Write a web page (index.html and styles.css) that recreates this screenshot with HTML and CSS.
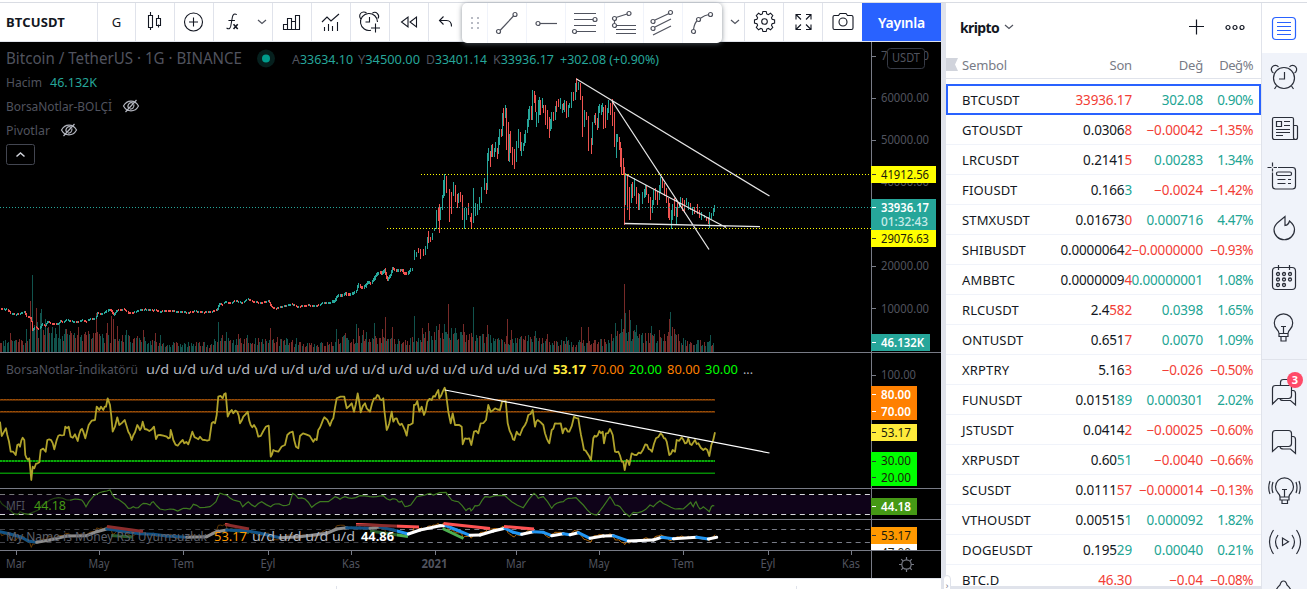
FILE: index.html
```
<!DOCTYPE html>
<html lang="tr">
<head>
<meta charset="utf-8">
<title>BTCUSDT</title>
<link rel="stylesheet" href="styles.css">
</head>
<body>
<div class="app">
  <main class="left">
    <header class="toolbar">
      <div class="cell symbol">BTCUSDT</div>
      <div class="cell w38">G</div>
      <div class="cell w39"><svg class="ico" viewBox="0 0 28 28"><path d="M9.500 4v4m0 14v-3M7.500 7.500h4v12h-4zM17.500 7v3.500m0 9v-3M15.500 10.500h4v7h-4z"/></svg></div>
      <div class="cell w39"><svg class="ico" viewBox="0 0 28 28"><circle cx="13.500" cy="14" r="9"/><path d="M13.500 9.500v9M9 14h9"/></svg></div>
      <div class="cell w59"><svg class="ico" viewBox="0 0 28 28"><path d="M6 20.500c3 2 4 0 4.500-2l1.700-9.500c.6-3.500 2.500-4.500 4.800-3M8 12.500h7"/><path d="M13.500 16.500l4.500 5m0-5l-4.500 5" stroke-width="1.700"/></svg><svg class="chev" viewBox="0 0 10 6"><path d="M1 1l4 3.500L9 1"/></svg></div>
      <div class="cell w39"><svg class="ico" viewBox="0 0 28 28"><path d="M5.500 21.500v-5h4v5zm4 0v-11h4v11zm4 0v-8h4v8m0 0v-14h4v14zM5 21.500h17"/></svg></div>
      <div class="cell w39"><svg class="ico" viewBox="0 0 28 28"><path d="M5 13l5-5 4 4 8-7M7.500 22v-4m4 4v-7m4 7v-5m5 5v-9" transform="translate(0 1)"/></svg></div>
      <div class="cell w39"><svg class="ico" viewBox="0 0 28 28"><path d="M15 22.200A8.500 8.500 0 1 1 21.500 14M13.500 9v5h-4M5 11a4 4 0 0 1 5.500-6M16.500 5A4 4 0 0 1 22 10.500M19.500 15.500v9M15 20h9"/></svg></div>
      <div class="cell w39"><svg class="ico" viewBox="0 0 28 28"><path d="M13 9v10l-6.500-5zM21.500 9v10L15 14z"/></svg></div>
      <div class="cell w39 nob"><svg class="ico undo" viewBox="0 0 28 28"><path d="M10.500 8.500l-4 4 4 4M6.500 12.500h7c3 0 5 2 5 6"/></svg></div>
      <div class="spacer"></div>
      <div class="cell w24"><svg class="chev drop" viewBox="0 0 10 6"><path d="M1 1l4 3.500L9 1"/></svg></div>
      <div class="cell w39"><svg class="ico" viewBox="0 0 28 28"><circle cx="14.500" cy="13.500" r="2.800"/><path d="M12.300 4.500h3.400l.6 2.600 1.600.7 2.300-1.400 2.400 2.400-1.400 2.300.7 1.600 2.600.6v3.400l-2.600.6-.7 1.600 1.400 2.300-2.400 2.400-2.300-1.400-1.600.7-.6 2.600h-3.400l-.6-2.600-1.600-.7-2.300 1.400-2.400-2.400 1.400-2.300-.7-1.600-2.600-.6v-3.400l2.600-.6.7-1.600-1.400-2.300 2.400-2.400 2.300 1.400 1.600-.7z" transform="translate(1.100 -.9) scale(.96)"/></svg></div>
      <div class="cell w39"><svg class="ico" viewBox="0 0 28 28"><path d="M12 11.500l-5-5m0 5v-5h5M17 11.500l5-5m-5 0h5v5M12 16.500l-5 5m0-5v5h5M17 16.500l5 5m0-5v5h-5"/></svg></div>
      <div class="cell w39 nob"><svg class="ico" viewBox="0 0 28 28"><path d="M5.500 7.500h4l1.500-2h6l1.500 2h4q1.500 0 1.500 1.500v11q0 1.500-1.500 1.500h-17Q4 21.500 4 20V9q0-1.500 1.500-1.500z"/><circle cx="14" cy="14" r="4"/></svg></div>
      <button class="publish">Yayınla</button>
      <div class="floatbar">
        <div class="fcell grip"><svg width="10" height="14" viewBox="0 0 10 14"><g fill="#b8bbc4"><path d="M1 1h2v2H1zM7 1h2v2H7zM1 6h2v2H1zM7 6h2v2H7zM1 11h2v2H1zM7 11h2v2H7z"/></g></svg></div>
        <div class="fcell"><svg class="draw" viewBox="0 0 28 28"><path d="M7 21.500L20.500 7"/><circle cx="5.500" cy="22.500" r="2"/><circle cx="22" cy="5.500" r="2"/></svg></div>
        <div class="fcell"><svg class="draw" viewBox="0 0 28 28"><path d="M8 14.500h17"/><circle cx="6" cy="14.500" r="2"/></svg></div>
        <div class="fcell"><svg class="draw" viewBox="0 0 28 28"><path d="M3 4.500h22M3 10.500h19M3 16.500h22M6 22.500h19"/><circle cx="24" cy="10.500" r="2"/><circle cx="3.500" cy="22.500" r="2"/></svg></div>
        <div class="fcell"><svg class="draw" viewBox="0 0 28 28"><path d="M6 8.500L17 5M4.500 11.500v3M6.500 16.500H26M6 20.500h20M6 24.500h20"/><circle cx="4.500" cy="9.500" r="2"/><circle cx="19" cy="4.500" r="2"/><circle cx="4.500" cy="16.500" r="2"/></svg></div>
        <div class="fcell"><svg class="draw" viewBox="0 0 28 28"><path d="M5 11.500l15-7M5 18.500L22 10M4 26l18-9"/><circle cx="4" cy="12.500" r="2"/><circle cx="21.500" cy="3.500" r="2"/><circle cx="4" cy="19.500" r="2"/></svg></div>
        <div class="fcell last"><svg class="draw" viewBox="0 0 28 28"><path d="M4.500 20.500Q5.500 14 8 12M11 9.500Q16 6 20 5.500"/><circle cx="4.500" cy="22.500" r="2"/><circle cx="9.500" cy="10.500" r="2"/><circle cx="21.500" cy="5.500" r="2"/></svg></div>
      </div>
    </header>
    <svg class="chart" viewBox="0 42 941 536">
      <rect x="0" y="42" width="941" height="536" fill="#000"/>
      <g shape-rendering="crispEdges">
        <g id="volume"></g>
        <g id="candles"></g>
      </g>
      <g fill="none" stroke-dasharray="1 2" shape-rendering="crispEdges">
        <path d="M421 174.500H871M387 228.500H871" stroke="#ff0"/>
        <path d="M0 207.500H871" stroke="#26a69a"/>
      </g>
      <path d="M576.500 79L769.500 196M612 101L709 249.500M626 174.500L726 227.500M624.500 223.500L760 226.700" fill="none" stroke="#e4e4e4" stroke-width="1.300"/>

      <g fill="none" stroke-width="1.500">
        <path d="M0 399.800H715M0 411.800H715" stroke="#9b4d07"/>
        <path d="M0 399.800H715M0 411.800H715" stroke="#6b3505" stroke-dasharray="1 2" stroke-width="1"/>
        <path d="M0 461H715M0 473.300H715" stroke="#058a05"/>
        <path d="M0 461H715" stroke="#0cc00c" stroke-dasharray="2 1"/>
      </g>
      <polyline id="rsi" fill="none" stroke="#b0a32b" stroke-width="1.800" stroke-linejoin="round"/>
      <path d="M445 390L769.500 453" stroke="#fff" stroke-width="1.200"/>

      <rect x="0" y="495" width="871" height="19" fill="#0f0319"/>
      <path d="M0 494.500H871M0 514.500H871" stroke="#d8d8dc" stroke-dasharray="5 4.300" stroke-width="1"/>
      <polyline id="mfi" fill="none" stroke="#3e7a20" stroke-width="1.200"/>
      <rect x="0" y="490" width="70" height="23" fill="#000" opacity=".45"/>

      <path d="M0 529.500H871M0 542.500H871" stroke="#787b86" stroke-dasharray="5 4.300"/>
      <g fill="none" stroke-width="3">
        <polyline id="money-raw" stroke="#b86a08" stroke-width="1"/>
        <path d="M111 535.500L132 537M230 530L249 532.500M370 531L408 536.500M442.500 528.500L463.500 538.500" stroke="#4caf50"/>
        <g id="money"></g>
        <path d="M107 526.500L143 531.500M225 524.500L249 529M356 524.500L419 527M443.500 523.500L490 528.500M504 526.500L534 529" stroke="#ff5252"/>
      </g>
      <rect x="0" y="524" width="397" height="24" fill="#000" opacity=".45"/>

      <path d="M0 352.500H941M0 488.500H941M0 519.500H941M0 550.500H941M871.500 42V578" stroke="#787b86" fill="none"/>
      <path d="M16.500 551v4M99.500 551v4M183.500 551v4M268.500 551v4M351.500 551v4M435.500 551v4M516.500 551v4M599.500 551v4M683.500 551v4M768.500 551v4M851.500 551v4M872 56.500h4M872 98.500h4M872 140.500h4M872 266.500h4M872 308.500h4M872 375.500h4" stroke="#787b86"/>

      <g class="t axis" text-anchor="middle">
        <text x="16" y="568" textLength="20">Mar</text><text x="99" y="568" textLength="21">May</text><text x="183" y="568" textLength="22">Tem</text><text x="268" y="568" textLength="15">Eyl</text><text x="351" y="568" textLength="18">Kas</text><text x="434.500" y="568" textLength="26" font-weight="700">2021</text><text x="516" y="568" textLength="20">Mar</text><text x="599" y="568" textLength="21">May</text><text x="683" y="568" textLength="22">Tem</text><text x="768" y="568" textLength="15">Eyl</text><text x="851" y="568" textLength="18">Kas</text>
      </g>
      <g class="t axis">
        <text x="881" y="60" textLength="48">70000.00</text><text x="881" y="102" textLength="48">60000.00</text><text x="881" y="144" textLength="48">50000.00</text><text x="881" y="186" textLength="48">40000.00</text><text x="881" y="270" textLength="48">20000.00</text><text x="881" y="312.500" textLength="48">10000.00</text><text x="881" y="379" textLength="35">100.00</text>
      </g>
      <rect x="887.500" y="48.500" width="37" height="20" rx="3" fill="#000" stroke="#363a45"/>
      <text class="axis" x="892" y="62" textLength="28">USDT</text>
      <g fill="#ff0"><rect x="871" y="166" width="65" height="17"/><rect x="871" y="230" width="65" height="17"/></g>
      <g fill="#26a69a"><rect x="871" y="199" width="65" height="31"/><rect x="871" y="334" width="59" height="17"/></g>
      <rect x="871" y="386" width="46" height="34" fill="#ff8000"/><rect x="871" y="424" width="46" height="17" fill="#ffeb3b"/><rect x="871" y="452" width="46" height="34" fill="#0f0"/><rect x="871" y="498" width="46" height="17" fill="#459915"/><rect x="871" y="527" width="46" height="17" fill="#ff9800"/><rect x="871" y="544" width="46" height="6" fill="#fff"/>
      <g class="t tag">
        <text x="881" y="179" textLength="48">41912.56</text><text x="881" y="243" textLength="48">29076.63</text>
        <text x="881" y="437" textLength="30">53.17</text><text x="881" y="465" textLength="30">30.00</text><text x="881" y="482" textLength="30">20.00</text><text x="881" y="540" textLength="30">53.17</text>
        <g clip-path="url(#tagclip)"><text x="881" y="557" textLength="30">47.00</text></g>
        <g class="light"><text x="881" y="212" textLength="48">33936.17</text><text x="881" y="226" textLength="47" class="timer">01:32:43</text><text x="881" y="347" textLength="43">46.132K</text><text x="881" y="399" textLength="30">80.00</text><text x="881" y="416" textLength="30">70.00</text><text x="881" y="511" textLength="30">44.18</text></g>
      </g>
      <clipPath id="tagclip"><rect x="871" y="544" width="60" height="6"/></clipPath>
      <path d="M872 174.500h4M872 238.500h4M872 432.500h4M872 461.500h4M872 477.500h4M872 535.500h4" stroke="#333"/>
      <path d="M872 207.500h4M872 342.500h4M872 394.500h4M872 411.500h4M872 506.500h4" stroke="#fff"/>
      <g stroke="#787b86" fill="none" stroke-width="1.200"><circle cx="906.500" cy="564.500" r="4.700"/><path d="M906.500 557v2.800M906.500 569.200v2.800M899 564.500h2.800M911.200 564.500h2.800M901.200 559.200l2 2M909.800 567.800l2 2M911.800 559.200l-2 2M903.200 567.800l-2 2"/></g>

      <g class="t legend">
        <text x="6" y="64" class="title" textLength="236">Bitcoin / TetherUS · 1G · BINANCE</text>
        <text x="292" y="64" textLength="61">A<tspan class="up">33634.10</tspan></text>
        <text x="358" y="64" textLength="62">Y<tspan class="up">34500.00</tspan></text>
        <text x="426" y="64" textLength="61">D<tspan class="up">33401.14</tspan></text>
        <text x="493" y="64" textLength="61">K<tspan class="up">33936.17</tspan></text>
        <text x="560" y="64" class="up" textLength="99">+302.08 (+0.90%)</text>
        <text x="6" y="87" textLength="36">Hacim</text><text x="50" y="87" class="up" textLength="47">46.132K</text>
        <text x="6" y="111" textLength="106">BorsaNotlar-BOLÇİ</text>
        <text x="6" y="135" textLength="44">Pivotlar</text>
        <text x="6" y="374" textLength="132">BorsaNotlar-İndikatörü</text>
        <text x="146" y="374" class="ud" textLength="401">u/d u/d u/d u/d u/d u/d u/d u/d u/d u/d u/d u/d u/d u/d u/d</text>
        <text x="553" y="374" fill="#ffeb3b" font-weight="700" textLength="33">53.17</text>
        <text x="591" y="374" fill="#ff8000" textLength="33">70.00</text><text x="629" y="374" fill="#0f0" textLength="33">20.00</text><text x="667" y="374" fill="#ff8000" textLength="33">80.00</text><text x="705" y="374" fill="#0f0" textLength="33">30.00</text><text x="743" y="374" class="ud">...</text>
        <text x="6" y="510" textLength="19">MFI</text><text x="34" y="510" fill="#459915" textLength="32">44.18</text>
        <text x="6" y="541" class="over" textLength="201">My Name is Money RSI Uyumsuzluk</text>
        <text x="214" y="541" fill="#ff9800" textLength="33">53.17</text>
        <text x="252" y="541" class="ud" textLength="103">u/d u/d u/d u/d</text>
        <text x="361" y="541" fill="#fff" font-weight="700" textLength="33">44.86</text>
      </g>
      <circle cx="266" cy="58.500" r="9" fill="#06201e"/><circle cx="266" cy="58.500" r="4" fill="#009b8c"/>
      <g fill="none" stroke="#b2b5be" stroke-width="1.200"><path id="eye" d="M123.500 106c3.500-6.500 11.500-6.500 15 0-3.500 6.500-11.500 6.500-15 0zM125.500 112L136.500 100M128.500 108a3.500 3.500 0 0 1 4.500-5M133.800 104.500a3.500 3.500 0 0 1-4 4.500"/><use href="#eye" x="-62" y="24"/></g>
      <rect x="6.500" y="144.500" width="28" height="20" rx="2" fill="#000" stroke="#434651"/><path d="M16.500 156.500l4-3.500 4 3.500" fill="none" stroke="#d1d4dc" stroke-width="1.500"/>
    </svg>
    <div class="bottom"><i></i><i></i></div>
  </main>
  <div class="divider"></div>
  <section class="watch">
    <div class="whead"><b>kripto</b><svg class="chev" viewBox="0 0 10 6"><path d="M1 1l4 3.500L9 1"/></svg><span class="grow"></span>
      <svg width="16" height="16" viewBox="0 0 16 16"><path d="M7.500 .5v15M0 7.500h15" stroke="#131722" stroke-width="1.200"/></svg>
      <svg class="dots" width="20" height="8" viewBox="0 0 20 8"><g fill="none" stroke="#131722" stroke-width="1.200"><circle cx="3" cy="4.500" r="2"/><circle cx="10" cy="4.500" r="2"/><circle cx="17" cy="4.500" r="2"/></g></svg>
    </div>
    <div class="row cols"><svg class="flag" viewBox="0 0 12 13"><path d="M0 0h12L9 6.500 12 13H0z" fill="#d1d4dc"/></svg><span>Sembol</span><span>Son</span><span>Değ</span><span>Değ%</span></div>
    <div class="rows" id="rows"></div>
  </section>
  <nav class="side">
    <div class="item active"><svg viewBox="0 0 28 28"><rect x="2.500" y="3.500" width="23" height="22" rx="3.500"/><path d="M7 8.500h14M7 12.500h14M7 16.500h14M7 20.500h14"/></svg></div>
    <div class="item"><svg viewBox="0 0 28 28"><circle cx="14" cy="14" r="10.500"/><path d="M14.500 8v7H9M3.500 9a4 4 0 1 1 5-6M19.500 3a4 4 0 1 1 5 6M6.500 22l-2 3M21.500 22l2 3"/></svg></div>
    <div class="item"><svg viewBox="0 0 28 28"><path d="M23.500 11.500h3q1 0 1 1v11q0 2-2 2h-21q-2 0-2-2V5q0-1.500 1.500-1.500h18q1.500 0 1.500 1.500v18.500q0 2 2 2M6.500 7.500h5v5h-5zM14 7.500h6M14 11.500h6M6 15.500h14M6 18.500h14M6 21.500h7"/></svg></div>
    <div class="item"><svg viewBox="0 0 28 28"><path d="M2.500 8.500v13.500q0 3 3 3h17q3 0 3-3V6.500q0-3-3-3H8M2.500-1.500v4M2.500 4.500v3M-2.500 3.500h4M3.500 3.500h3.500M7.500 15.500h8M18 15.500h3M7.500 19.500h8M18 19.500h3"/><rect x="6.500" y="8" width="15" height="3.500" rx="1.500"/></svg></div>
    <div class="item"><svg viewBox="0 0 28 28"><path d="M9 7.500l6-5v9q3.500-.5 4.500-4.500c3 2.500 5 5 5 8.500a10.200 10.200 0 0 1-20.500 0c0-4 2-5.500 5-8z"/></svg></div>
    <div class="item"><svg viewBox="0 0 28 28"><rect x="2.500" y="3.500" width="23" height="22" rx="3.500"/><path d="M8.500 1v5M19.500 1v5"/><g stroke-width="1.300"><circle cx="8" cy="10" r="1.500"/><circle cx="14" cy="10" r="1.500"/><circle cx="20" cy="10" r="1.500"/><circle cx="8" cy="15.500" r="1.500"/><circle cx="14" cy="15.500" r="1.500"/><circle cx="20" cy="15.500" r="1.500"/><circle cx="8" cy="21" r="1.500"/><circle cx="14" cy="21" r="1.500"/></g></svg></div>
    <div class="item"><svg viewBox="0 0 28 28"><path d="M9 19.500q0-2-2-4a9.200 9.200 0 1 1 13 0q-2 2-2 4zM9 19.500v3h9v-3M9 22.500h9M11 22.500v4.500h5v-4.500M13.500 19.500v-7M11 12.500h5"/></svg></div>
    <div class="sep"></div>
    <div class="item"><svg viewBox="0 0 28 28"><path d="M2.500 26v-15.500q0-3 3-3h16v10q0 3-3 3H8zM10.500 7V4.500q0-3 3-3h8M22 12.500h1q2.500 0 2.500 3v11.500l-5-4.500h-7q-3 0-3.500-1.500"/></svg><em>3</em></div>
    <div class="item"><svg viewBox="0 0 28 28"><path d="M2.500 23.500v-18q0-3 3-3h13q3 0 3 3v10q0 3-3 3H8zM22 8.500h1q2.500 0 2.500 3v14l-5-4.500h-7q-3 0-3.500-2"/></svg></div>
    <div class="item"><svg viewBox="0 0 28 28"><path d="M10 19q0-2-2-4a9 9 0 1 1 13 0q-2 2-2 4zM10 19v3h9v-3M12 22v3.500h5.500V22M14.500 19v-7M12 11.500h5M3 4q-2 6 0 11M0 3q-2.500 7 0 13M26 4q2 6 0 11M29 3q2.500 7 0 13"/></svg></div>
    <div class="item"><svg viewBox="0 0 28 28"><path d="M12.500 10v7.500l6-3.800zM8 7q-5 7 0 14M3.500 2q-8 12 0 24M22 7q5 7 0 14M26.500 2q8 12 0 24"/></svg></div>
    <div class="item"><svg viewBox="0 0 28 28"><path d="M4 18q2-8 6-11 1-4 3.500-4t3.500 4q4 3 6 11"/></svg></div>
  </nav>
  <button class="handle">›</button>
</div>
<script src="chart.js"></script>
</body>
</html>
```
FILE: styles.css
```
* { box-sizing: border-box; }
body { margin: 0; width: 1307px; height: 589px; overflow: hidden; background: #fff; font-family: "Noto Sans", "Open Sans", sans-serif; color: #131722; }
.app { position: relative; display: flex; height: 589px; padding-top: 3px; background: linear-gradient(#fff 2px, #d9dce3 2px, #d9dce3 3px, #fff 3px); }
.left { display: flex; flex-direction: column; width: 941px; flex: none; }
.toolbar { position: relative; display: flex; height: 39px; border-bottom: 1px solid #e0e3eb; }
.cell { display: flex; align-items: center; justify-content: center; flex: none; border-right: 1px solid #e0e3eb; font-size: 13px; }
.symbol { width: 98px; justify-content: flex-start; padding-left: 6px; font-weight: 700; font-size: 13px; letter-spacing: .15px; }
.w38 { width: 38px; }
.w39 { width: 39px; }
.w59 { width: 59px; gap: 13px; }
.w59 .ico { width: 26px; margin-left: 2px; margin-right: -3px; }
.w24 { width: 24px; }
.nob { border-right: 0; }
.spacer { flex: 1; }
.ico { width: 28px; height: 28px; fill: none; stroke: #131722; stroke-width: 1.100; }
.undo { margin-left: -4px; }
.chev { width: 10px; height: 6px; fill: none; stroke: #50535e; stroke-width: 1.200; flex: none; }
.drop { margin-left: 4px; }
.publish { width: 79px; height: 38px; border: 0; background: #2962ff; color: #fff; font: 600 14px "Noto Sans", sans-serif; padding: 0; letter-spacing: -.25px; }
.floatbar { position: absolute; left: 462px; top: 0; width: 260px; height: 40px; display: flex; background: #fff; border-radius: 5px; box-shadow: 0 1px 5px rgba(90, 100, 110, .7); }
.fcell { width: 39px; display: flex; align-items: center; justify-content: center; border-right: 1px solid #f0f3fa; }
.grip { width: 26px; }
.last { border-right: 0; }
.draw { width: 28px; height: 28px; fill: none; stroke: #50535e; stroke-width: 1.200; }
.draw circle { fill: #fff; }
.chart { width: 941px; height: 536px; display: block; flex: none; }
.axis { font-size: 12px; fill: #50535e; }
.tag { font-size: 12px; fill: #1c1c0c; }
.light { fill: #fff; font-weight: 600; }
.timer { fill: #c8ece8; font-weight: 500; }
.legend { font-size: 12.500px; fill: #50535e; }
.title { font-size: 15.500px; }
.over { fill: #5d606b; }
.up { fill: #26a69a; }
.ud { fill: #b2b5be; }
.bottom { flex: 1; border-top: 1px solid #e0e3eb; display: flex; align-items: flex-end; padding-left: 336px; gap: 459px; }
.bottom i { width: 1px; height: 3px; background: #e0e3eb; }
.divider { width: 5px; flex: none; background: #e0e3eb; }
.watch { width: 315px; height: 583px; flex: none; overflow: hidden; display: flex; flex-direction: column; box-shadow: 0 3px #e0e3eb; }
.whead { display: flex; align-items: center; height: 48px; padding: 0 16px 0 14px; font-size: 14px; flex: none; letter-spacing: -.6px; }
.whead .chev { margin: 0 0 0 5px; }
.grow { flex: 1; }
.dots { margin-left: 20px; }
.row { position: relative; display: grid; grid-template-columns: 88px 82px 71px 50px; align-items: center; height: 30px; flex: none; padding: 0 8px 0 16px; font-size: 13.500px; letter-spacing: -.15px; white-space: nowrap; border-bottom: 1px solid #f0f3fa; }
.row span + span { text-align: right; justify-self: end; }
.row > span:last-child { letter-spacing: -.45px; }
.cols { height: 28px; color: #787b86; border-bottom: 1px solid #e0e3eb; font-size: 13px; }
.flag { position: absolute; left: 0; top: 7px; width: 12px; height: 13px; }
.rows { padding-top: 6px; }
.row.sel { margin-top: -1px; height: 31px; border: 2px solid #2962ff; padding: 0 6px 0 14px; }
.row .sym { font-size: 13px; letter-spacing: .15px; }
.neg { color: #f23e36; }
.pos { color: #22a594; }
.side { width: 46px; flex: none; border-left: 1px solid #e0e3eb; background: #f0f3fa; height: 586px; overflow: hidden; }
.item { position: relative; height: 50px; display: flex; align-items: center; justify-content: center; padding-right: 1px; }
.item svg { width: 28px; height: 28px; fill: none; stroke: #2a2e39; stroke-width: 1.200; overflow: visible; }
.active { background: #fff; }
.item.active svg { stroke: #2962ff; }
.sep { height: 14px; background: linear-gradient(#f0f3fa 6px, #e0e3eb 6px, #e0e3eb 7px, #f0f3fa 7px); }
.item em { position: absolute; left: 25px; top: 5px; width: 16px; height: 16px; border-radius: 50%; background: #ff4a68; color: #fff; font: 700 11px/16px "Noto Sans", sans-serif; text-align: center; }
.handle { position: absolute; left: 943px; top: 575px; width: 8px; height: 18px; padding: 3px 0 0; border: 1px solid #e0e3eb; border-radius: 4px; background: #fff; color: #787b86; font-size: 9px; line-height: 10px; }
```
FILE: chart.js
```
const NS = 'http://www.w3.org/2000/svg';
const $ = id => document.getElementById(id);
let seed = 7;
const rnd = () => (seed = (seed * 16807) % 2147483647) / 2147483647;
const pts = s => s.trim().split(/\s+/).map(p => p.split(',').map(Number));
function rect(parent, x, y, w, h, fill) {
  const r = document.createElementNS(NS, 'rect');
  Object.entries({ x, y, width: w, height: h, fill }).forEach(([k, v]) => r.setAttribute(k, v));
  parent.appendChild(r);
}
function at(list, x) {
  for (let i = 1; i < list.length; i++) {
    const [a, b] = list[i - 1], [c, d] = list[i];
    if (x <= c) return b + (d - b) * (x - a) / (c - a || 1);
  }
  return list[list.length - 1][1];
}
// Coordinates are stored in thirds of a pixel; the second half starts at x = 370.
const join = (a, b) => pts(a).concat(pts(b).map(([x, y]) => [x + 1110, y]));

const early = join('0,178 20,178 30,190 45,193 60,190 72,185 78,200 92,205 96,240 104,230 115,238 125,222 135,228 142,215 160,222 175,220 180,212 190,216 200,210 215,215 235,216 245,210 258,215 270,206 286,205 291,190 310,190 325,178 332,180 338,195 350,182 370,178 385,188 400,188 415,180 430,178 440,180 465,180 475,185 515,181 530,186 565,188 580,183 600,186 630,186 650,180 656,160 665,163 678,155 690,162 700,153 715,155 725,158 745,148 760,155 780,160 805,152 812,170 825,175 840,172 862,165 880,162 888,170 905,168 925,165 945,168 960,163 972,157 990,158 1003,152 1010,138 1025,136 1035,130 1045,135 1060,128 1068,122 1073,104 1085,115 1095,108 1100,97',
  '0,100 8,92 16,75 28,66 33,72 42,60 50,90 60,75 66,55 75,62 85,60 95,60 100,72 110,72 120,60 128,58 132,30 140,15');
const g = $('candles');
let prev = 178;
for (let x = 1; x < 413; x++) {
  const y = at(early, x * 3), d = y - prev;
  const up = d < -1 || (d <= 1 && rnd() > .5);
  const slack = x > 330 ? 3 : 1.2;
  const top = Math.min(y, prev) - slack - rnd() * 2, bot = Math.max(y, prev) + slack + rnd() * 2;
  if (x % 4 !== 3 || Math.abs(d) > 3) rect(g, x, Math.round(250 + top / 3), 1, Math.max(2, Math.round((bot - top) / 3)), up ? '#26a69a' : '#ef5350');
  prev = y;
}
const bars = 'g102,570,600 g110,575,590 r115,565,580 r122,567,597 r131,567,588 g136,558,585 g142,530,565 r146,513,550 r152,530,545 g156,518,538 g163,505,515 g169,450,508 r175,445,485 r178,432,518 g182,440,480 g187,405,450 g190,360,415 g194,343,410 r200,348,400 r208,388,488 r214,395,462 g220,367,410 r226,375,425 r233,402,445 g236,400,430 r242,395,425 r247,405,480 g253,445,508 g259,445,480 r265,430,465 r272,470,485 r275,460,505 g280,385,490 g286,430,470 g292,432,465 g298,410,450 g304,382,430 g313,355,390 r320,370,402 g323,280,390 g326,265,305 r332,273,320 g335,255,290 r338,252,290 g344,263,290 g347,245,275 r353,265,298 g356,230,280 g359,208,255 r365,208,232 g368,160,230 r371,145,200 g376,135,175 r379,145,272 r386,187,305 g389,222,305 r392,213,280 r398,262,315 r404,268,328 g409,242,305 g415,208,265 r421,217,275 g425,245,288 g431,250,275 g434,223,258 g437,210,250 g443,178,220 g446,147,200 g449,138,180 r455,138,180 g458,90,180 r464,93,130 r467,105,157 g470,155,200 g476,120,190 g479,110,165 r482,120,165 g488,115,145 r491,135,160 r497,135,195 r503,150,208 r509,172,236 g512,178,215 g515,155,205 r521,157,183 g525,137,180 r528,123,155 r534,118,142 g540,113,145 g546,132,160 r549,130,150 g554,120,155 r558,122,172 g565,135,172 g569,130,145 g575,97,145 r580,97,125 g586,68,120 r590,55,98 g594,65,90 r600,70,120 r607,108,230 g613,150,200 r619,157,180 r625,168,272 r634,233,282 g637,187,255 g644,165,190 r647,158,195 r653,175,212 g656,138,205 g659,132,160 g665,135,165 g668,128,155 r671,140,205 r677,135,205 g683,143,178 g686,120,160 r692,130,165 r698,118,200 r704,155,260 g710,222,293 g713,222,245 r719,232,270 r722,245,320 r725,265,345 r731,295,345 r734,320,495 g737,340,435 r743,343,450 r749,380,478 g755,372,430 r758,365,412 g764,355,410 r770,382,432 r776,398,450 g779,402,450 g786,395,430 g792,388,415 g797,375,410 r800,378,405 r806,402,430 r812,410,480 g818,420,460 g821,390,435 r827,385,420 r833,392,435 g838,375,420 g842,352,400 r848,350,382 r854,370,410 r860,385,430 r866,415,475 r869,430,480 g875,450,508 g878,432,480 r884,415,470 g890,440,490 r893,425,470 g899,430,445 g902,410,440 r908,415,455 r914,420,460 g920,415,435 g926,425,450 r932,430,450 g938,440,465 r944,440,460 r953,432,462 r959,450,475 g965,455,478 g974,465,475 r980,472,485 r986,470,492 g989,455,502 g995,458,475 g1000,445,468 g1003,435,455';
bars.split(' ').forEach(b => {
  const [x, t, u] = b.slice(1).split(',').map(Number);
  rect(g, Math.floor(380 + x / 3), Math.round(60 + t / 3), 1, Math.round((u - t) / 3), b[0] === 'g' ? '#26a69a' : '#ef5350');
});

const spikes = join('31,19 80,23 91,51 97,77 104,27 109,44 113,30 121,39 124,43 130,22 136,33 145,25 155,19 165,24 178,30 197,23 211,21 222,19 235,25 253,18 265,21 290,39 298,18 308,18 322,29 334,36 340,33 352,26 367,17 380,22 403,14 430,22 466,19 482,17 655,30 680,20 715,18 743,17 775,14 811,24 832,15 858,14 888,14 1010,23 1036,19 1068,28 1075,24 1090,22 1100,20',
  '12,29 37,23 46,35 67,25 133,36 157,24 175,29 200,26 208,28 222,28 235,48 243,24 255,24 280,28 310,45 352,27 412,33 424,22 497,21 532,18 590,15 634,25 655,25 737,29 755,33 763,68 767,39 779,42 782,32 790,21 800,27 845,26 868,22 898,33 901,40 907,25 913,23 925,18 1020,17');
const level = join('0,10 60,10 90,20 150,20 350,15 440,11 500,8 630,8 660,13 800,10 830,11 900,9 1000,8 1020,13 1110,14', '0,15 80,10 120,12 180,17 260,17 350,14 480,13 600,9 700,11 760,20 820,15 900,17 960,9 1035,10');
const v = $('volume');
const spiked = new Set(spikes.map(s => Math.floor(s[0] / 3)));
for (let i = 0, x = 0; x < 714; i++, x = Math.round(i * 1.372)) {
  if (spiked.has(x)) continue;
  const h = Math.round(at(level, x * 3) * (.55 + rnd() * .75));
  rect(v, x, 352 - h, 1, h, rnd() > .48 ? '#11534d' : '#772a28');
}
spikes.forEach(([x, h]) => {
  const red = [91, 109, 334, 340, 290, 1075, 1156, 1345, 1522, 1744, 1765, 1873, 1889, 2008].includes(x) || (x % 3 === 1 && h < 30);
  rect(v, Math.floor(x / 3), 352 - h, 1, h, red ? '#772a28' : '#11534d');
});

const rsi = join('0,200 5,243 18,220 22,240 32,290 47,300 52,270 60,275 68,248 73,255 76,300 80,310 88,310 94,375 98,335 103,340 113,325 118,322 122,285 137,290 142,255 153,255 163,283 170,255 180,240 192,240 196,215 206,215 212,245 225,238 233,258 242,225 250,230 256,250 266,210 285,195 290,155 298,165 303,155 310,165 318,155 323,130 330,150 338,230 345,215 352,187 358,210 374,195 385,230 395,255 405,232 412,210 420,225 428,200 434,222 448,228 462,215 468,252 480,240 500,245 510,248 512,225 520,255 533,272 548,255 553,265 565,268 577,230 590,250 600,245 615,255 628,255 635,205 645,205 650,180 655,125 668,130 677,115 683,185 695,165 700,175 712,170 720,205 730,185 743,170 752,210 762,210 775,245 790,228 806,212 812,305 820,285 835,290 855,270 862,240 878,230 888,275 895,280 900,243 918,238 940,260 950,255 955,225 965,205 973,187 990,212 1000,190 1010,130 1033,125 1040,160 1055,145 1062,170 1073,115 1082,172 1095,145 1105,165',
  '0,170 12,130 22,120 30,133 40,130 43,165 50,225 58,205 65,170 70,200 80,190 90,210 100,215 110,242 115,210 128,205 132,150 142,138 148,170 155,155 162,180 172,140 185,135 195,125 205,105 208,130 218,110 224,98 228,115 235,170 242,205 248,175 255,210 268,210 275,215 278,268 285,250 298,250 304,270 312,230 325,235 332,205 348,195 355,150 362,170 375,160 390,165 396,140 407,138 413,205 425,240 433,255 440,230 450,240 465,210 475,180 488,165 495,215 503,195 520,210 530,250 538,265 545,225 555,205 572,205 578,235 588,220 598,230 612,185 625,190 633,240 642,285 652,295 663,315 670,250 678,245 688,228 698,230 702,265 708,235 720,222 728,240 735,290 745,290 755,320 760,320 764,345 770,315 778,330 785,295 800,300 812,295 826,268 836,282 846,290 858,250 872,235 882,250 890,260 898,300 908,285 915,290 920,255 935,247 945,265 955,250 965,270 975,255 985,265 1000,285 1012,285 1018,303 1024,270 1035,232');
const mfi = join('0,437 10,450 40,475 55,478 60,470 85,478 115,465 130,448 150,435 175,428 200,435 225,432 245,435 258,455 275,430 290,418 310,410 330,405 345,430 365,440 385,460 400,455 415,458 430,445 450,450 460,440 480,462 510,462 533,468 550,460 570,462 580,448 600,458 630,455 648,440 660,415 680,420 700,435 720,440 728,455 745,440 765,455 785,440 812,455 825,447 850,452 868,448 878,415 895,430 915,432 935,457 960,440 985,440 1005,425 1020,433 1035,425 1055,430 1080,422 1110,425',
  '20,425 40,422 60,435 75,432 85,440 95,438 105,455 122,450 140,425 165,420 180,415 190,420 228,412 245,435 265,440 288,467 300,460 303,468 315,452 328,450 345,425 375,422 405,422 425,440 460,458 492,415 505,430 520,425 545,460 560,445 580,440 595,430 618,428 640,450 662,475 680,480 720,425 735,450 750,455 765,475 778,485 790,472 815,470 840,450 850,455 870,437 890,450 915,462 940,462 962,442 970,455 978,440 990,462 1000,455 1018,470 1024,455 1033,453');
const line = (list, jitter) => {
  const out = [];
  list.forEach(([x, y], i) => {
    out.push([x, y]);
    const n = list[i + 1];
    if (n && n[0] - x > 7) out.push([(x + n[0]) / 2, (y + n[1]) / 2 + (rnd() - .5) * jitter]);
  });
  return out;
};
const draw = list => list.map(([x, y]) => (x / 3).toFixed(1) + ',' + (355 + y / 3).toFixed(1)).join(' ');
const fine = line(rsi, 14);
$('rsi').setAttribute('points', draw(fine));
$('mfi').setAttribute('points', draw(line(mfi, 6)));
$('money-raw').setAttribute('points', draw(fine.map(([x, y]) => [x, 523 + (y - 171) * .265])));
const ma = join('0,530 30,537 60,545 85,558 110,562 150,555 200,543 260,542 290,530 320,522 350,526 420,536 460,538 500,543 560,547 620,545 650,530 680,525 740,527 780,535 840,548 900,545 980,535 1010,522 1040,518 1080,519', '0,520 30,516 70,525 115,537 150,525 210,512 228,512 260,525 300,541 330,540 370,528 405,520 430,532 455,538 490,530 520,532 545,542 580,536 600,539 625,533 660,550 700,543 730,542 775,558 850,555 875,547 910,551 980,547 1015,552 1040,547');
ma.slice(1).forEach((p, i) => {
  const s = document.createElementNS(NS, 'polyline');
  s.setAttribute('points', draw([ma[i], p]));
  s.setAttribute('stroke', p[1] > ma[i][1] ? '#2196f3' : '#fff');
  s.setAttribute('stroke-linecap', 'round');
  $('money').appendChild(s);
});

// symbol | unchanged digits | ticking digits | tick direction | change | change %
`BTCUSDT||33936.17|neg|302.08|0.90%
GTOUSDT|0.0306|8|neg|−0.00042|−1.35%
LRCUSDT|0.2141|5|neg|0.00283|1.34%
FIOUSDT|0.166|3|pos|−0.0024|−1.42%
STMXUSDT|0.01673|0|neg|0.000716|4.47%
SHIBUSDT|0.0000064|2|neg|−0.0000000|−0.93%
AMBBTC|0.0000009|4|neg|0.00000001|1.08%
RLCUSDT|2.4|582|neg|0.0398|1.65%
ONTUSDT|0.651|7|neg|0.0070|1.09%
XRPTRY|5.16|3|neg|−0.026|−0.50%
FUNUSDT|0.0151|89|pos|0.000301|2.02%
JSTUSDT|0.0414|2|neg|−0.00025|−0.60%
XRPUSDT|0.60|51|pos|−0.0040|−0.66%
SCUSDT|0.0111|57|neg|−0.000014|−0.13%
VTHOUSDT|0.00515|1|pos|0.000092|1.82%
DOGEUSDT|0.195|29|pos|0.00040|0.21%
BTC.D||46.30|neg|−0.04|−0.08%`.split('\n').forEach((l, i) => {
  const [s, a, b, c, d, p] = l.split('|');
  const k = d[0] === '−' ? 'neg' : 'pos';
  $('rows').insertAdjacentHTML('beforeend', `<div class="row${i ? '' : ' sel'}"><span class="sym">${s}</span><span>${a}<span class="${c}">${b}</span></span><span class="${k}">${d}</span><span class="${k}">${p}</span></div>`);
});
document.querySelectorAll('.chart text[textLength]').forEach(t => t.setAttribute('lengthAdjust', 'spacingAndGlyphs'));
```
